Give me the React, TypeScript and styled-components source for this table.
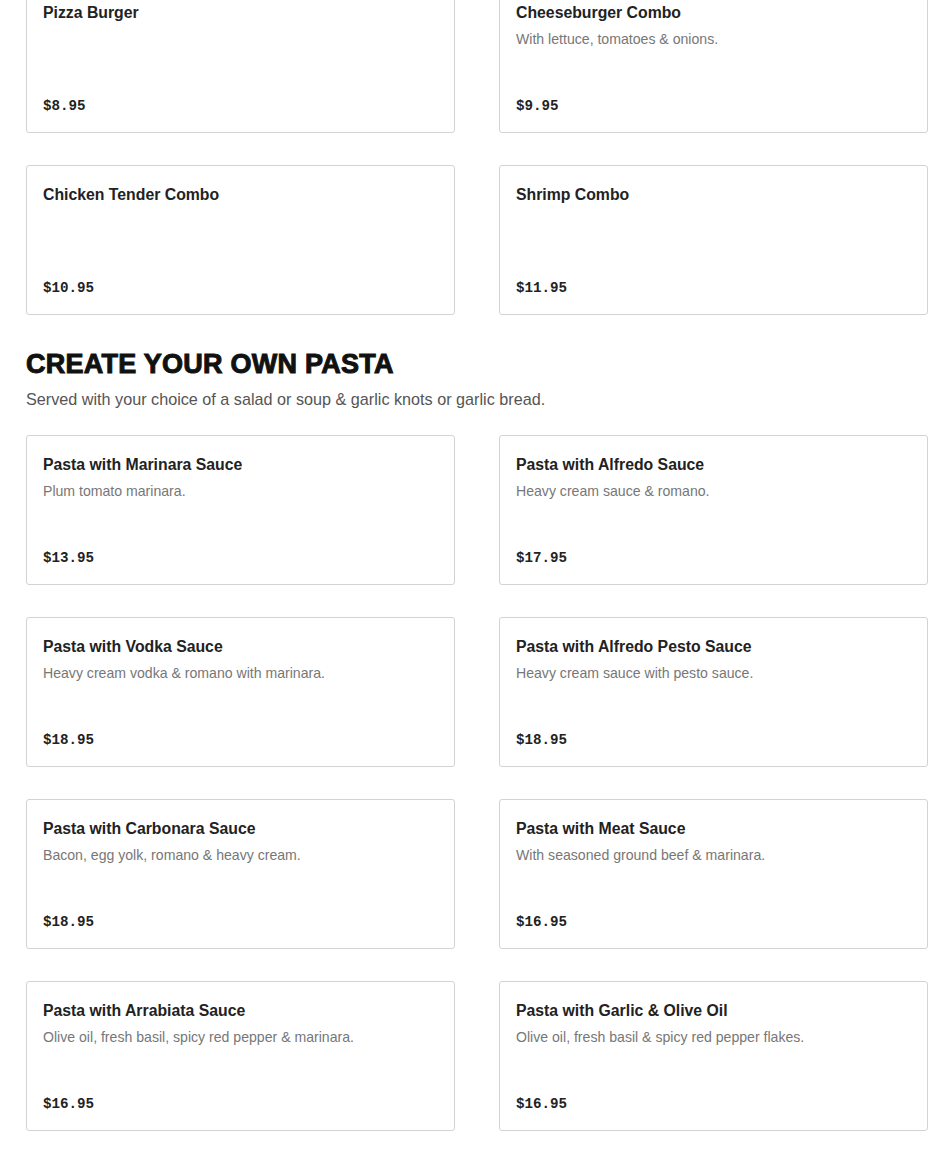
import React from 'react'
import styled, { createGlobalStyle } from 'styled-components'

const GlobalStyle = createGlobalStyle`
  html, body {
    margin: 0;
    padding: 0;
    background: #ffffff;
  }
  body {
    font-family: 'Liberation Sans', Arial, sans-serif;
    color: #222222;
  }
`

type Item = {
  name: string
  description?: string
  price: string
}

const combos: Item[] = [
  { name: 'Pizza Burger', price: '$8.95' },
  { name: 'Cheeseburger Combo', description: 'With lettuce, tomatoes & onions.', price: '$9.95' },
  { name: 'Chicken Tender Combo', price: '$10.95' },
  { name: 'Shrimp Combo', price: '$11.95' },
]

const pastas: Item[] = [
  { name: 'Pasta with Marinara Sauce', description: 'Plum tomato marinara.', price: '$13.95' },
  { name: 'Pasta with Alfredo Sauce', description: 'Heavy cream sauce & romano.', price: '$17.95' },
  { name: 'Pasta with Vodka Sauce', description: 'Heavy cream vodka & romano with marinara.', price: '$18.95' },
  { name: 'Pasta with Alfredo Pesto Sauce', description: 'Heavy cream sauce with pesto sauce.', price: '$18.95' },
  { name: 'Pasta with Carbonara Sauce', description: 'Bacon, egg yolk, romano & heavy cream.', price: '$18.95' },
  { name: 'Pasta with Meat Sauce', description: 'With seasoned ground beef & marinara.', price: '$16.95' },
  { name: 'Pasta with Arrabiata Sauce', description: 'Olive oil, fresh basil, spicy red pepper & marinara.', price: '$16.95' },
  { name: 'Pasta with Garlic & Olive Oil', description: 'Olive oil, fresh basil & spicy red pepper flakes.', price: '$16.95' },
]

const Page = styled.main`
  padding: 0 22px 30px 26px;
  margin-top: -17px;
`

const Section = styled.section`
  & + & {
    margin-top: 33px;
  }
`

const Heading = styled.h2`
  margin: 0;
  font-family: 'Liberation Sans', Arial, sans-serif;
  font-weight: 700;
  font-size: 27px;
  line-height: 32px;
  letter-spacing: 0.25px;
  color: #111111;
  -webkit-text-stroke: 1px #111111;
  text-transform: uppercase;
`

const Intro = styled.p`
  margin: 8px 0 25px;
  font-size: 16.2px;
  line-height: 22px;
  color: #555555;
`

const Grid = styled.div`
  display: grid;
  grid-template-columns: 1fr 1fr;
  column-gap: 44px;
  row-gap: 32px;
`

const Card = styled.article`
  box-sizing: border-box;
  height: 150px;
  display: flex;
  flex-direction: column;
  padding: 17px 16px 16px;
  border: 1px solid #d3d3d3;
  border-radius: 3px;
  background: #ffffff;
`

const Name = styled.h3`
  margin: 0;
  font-size: 15.8px;
  line-height: 24px;
  font-weight: 700;
  color: #222222;
`

const Description = styled.p`
  margin: 3px 0 0;
  font-size: 14.1px;
  line-height: 22px;
  color: #777777;
`

const Price = styled.span`
  margin-top: auto;
  font-family: 'Liberation Mono', 'DejaVu Sans Mono', monospace;
  font-weight: 700;
  font-size: 14.2px;
  line-height: 20px;
  color: #222222;
`

const MenuCard = ({ item }: { item: Item }) => (
  <Card>
    <Name>{item.name}</Name>
    {!!item.description && <Description>{item.description}</Description>}
    <Price>{item.price}</Price>
  </Card>
)

export default function App() {
  return (
    <>
      <GlobalStyle />
      <Page>
        <Section>
          <Grid>
            {combos.map((item) => (
              <MenuCard key={item.name} item={item} />
            ))}
          </Grid>
        </Section>
        <Section>
          <Heading>Create Your Own Pasta</Heading>
          <Intro>Served with your choice of a salad or soup &amp; garlic knots or garlic bread.</Intro>
          <Grid>
            {pastas.map((item) => (
              <MenuCard key={item.name} item={item} />
            ))}
          </Grid>
        </Section>
      </Page>
    </>
  )
}
